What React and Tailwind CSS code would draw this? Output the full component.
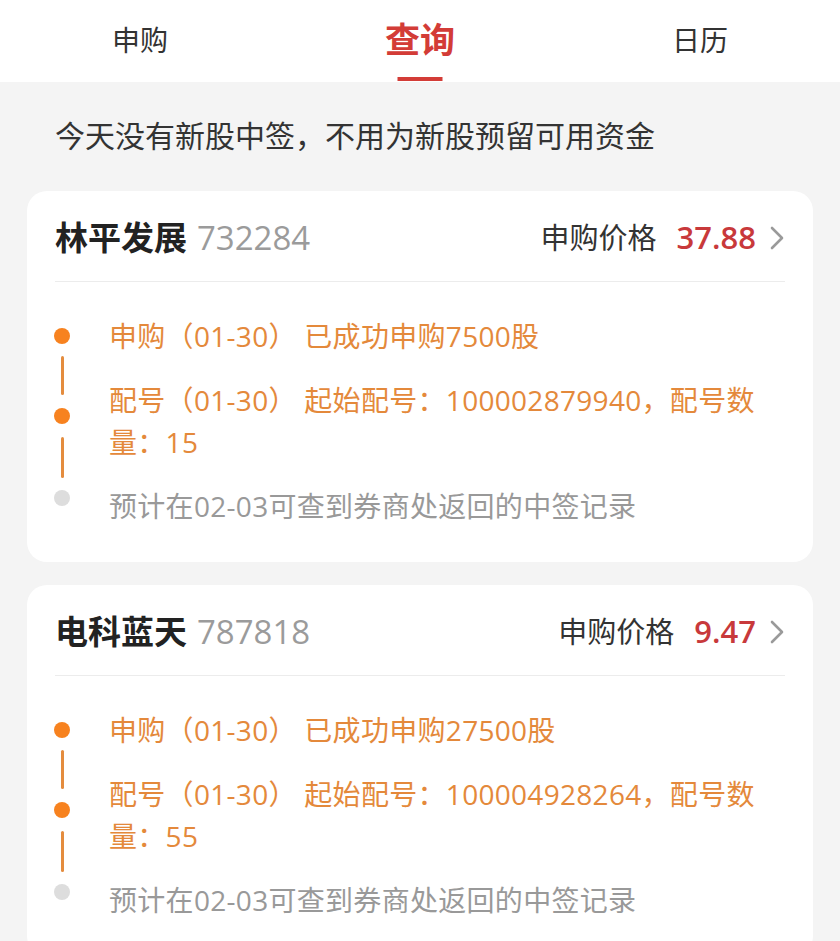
import { useState } from 'react';

const TABS = ['申购', '查询', '日历'];

const RECORDS = [
  {
    name: '林平发展',
    code: '732284',
    price: '37.88',
    steps: [
      { text: '申购（01-30） 已成功申购7500股', done: true },
      { text: '配号（01-30） 起始配号：100002879940，配号数量：15', done: true },
      { text: '预计在02-03可查到券商处返回的中签记录', done: false },
    ],
  },
  {
    name: '电科蓝天',
    code: '787818',
    price: '9.47',
    steps: [
      { text: '申购（01-30） 已成功申购27500股', done: true },
      { text: '配号（01-30） 起始配号：100004928264，配号数量：55', done: true },
      { text: '预计在02-03可查到券商处返回的中签记录', done: false },
    ],
  },
];

function Chevron() {
  return (
    <svg width="16" height="26" viewBox="0 0 16 26" fill="none" className="ml-[13px]">
      <polyline
        points="3,3 13,13 3,23"
        stroke="#9a9a9a"
        strokeWidth="2.6"
        strokeLinecap="round"
        strokeLinejoin="round"
      />
    </svg>
  );
}

// Left rail: dots and connectors drawn as their own column
function Rail() {
  return (
    <div className="flex flex-col items-center w-4 mt-[13px] shrink-0">
      <div className="w-4 h-4 rounded-full bg-[#f7821f]"></div>
      <div className="w-[3px] h-[39px] mt-[12px] mb-[13px] rounded-full bg-[#e48c3e]"></div>
      <div className="w-4 h-4 rounded-full bg-[#f7821f]"></div>
      <div className="w-[3px] h-[41px] mt-[13px] mb-[12px] rounded-full bg-[#e48c3e]"></div>
      <div className="w-4 h-4 rounded-full bg-[#dddddd]"></div>
    </div>
  );
}

function RecordCard({ record }) {
  return (
    <div className="bg-white rounded-[20px] overflow-hidden">
      <div className="h-[90px] px-[28px] pt-[3px] flex items-center justify-between">
        <div className="flex items-baseline">
          <span className="text-[33px] font-bold text-[#222]">{record.name}</span>
          <span className="text-[33px] text-[#9b9b9b] ml-[10px]">{record.code}</span>
        </div>
        <div className="flex items-center">
          <span className="text-[29px] text-[#333]">申购价格</span>
          <span className="text-[31px] font-semibold text-[#c8393b] ml-[20px]">{record.price}</span>
          <Chevron />
        </div>
      </div>
      <div className="mx-[28px] border-t border-[#ececec]"></div>
      <div className="flex pl-[27px] pr-[27px] pt-[33px] pb-[35px]">
        <Rail />
        <div className="ml-[39px] flex-1 flex flex-col gap-[22px] text-[28px] leading-[42px] tracking-[0.3px]">
          {record.steps.map((s, i) => (
            <div key={i} className={s.done ? 'text-[#e4893b]' : 'text-[#999]'}>
              {s.text}
            </div>
          ))}
        </div>
      </div>
    </div>
  );
}

export default function App() {
  const [active, setActive] = useState(1);

  return (
    <div
      className="min-h-screen bg-[#f4f4f4]"
      style={{ fontFamily: '"Open Sans", "Noto Sans CJK SC", sans-serif' }}
    >
      <div className="bg-white h-[82px] grid grid-cols-3">
        {TABS.map((t, i) => (
          <button
            key={t}
            onClick={() => setActive(i)}
            className="relative flex items-center justify-center pb-[2px]"
          >
            <span
              className={
                i === active
                  ? 'text-[35px] font-bold text-[#d33c37]'
                  : 'text-[28px] text-[#333]'
              }
            >
              {t}
            </span>
            {i === active && (
              <span className="absolute bottom-px left-1/2 -translate-x-1/2 w-[45px] h-[4px] bg-[#d33c37]"></span>
            )}
          </button>
        ))}
      </div>

      <div className="px-[55px] pt-[33px] pb-[34px] text-[30px] leading-[42px] text-[#333]">
        今天没有新股中签，不用为新股预留可用资金
      </div>

      <div className="mx-[27px] flex flex-col gap-[23px] pb-6">
        {RECORDS.map((r) => (
          <RecordCard key={r.code} record={r} />
        ))}
      </div>
    </div>
  );
}
